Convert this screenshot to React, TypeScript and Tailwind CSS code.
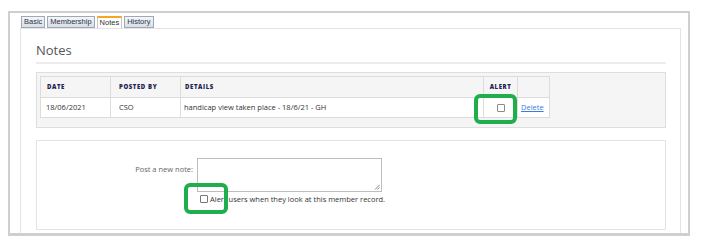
import React from "react";

const font = { fontFamily: '"Open Sans", "Liberation Sans", sans-serif' };

function Tab({ label, active }: { label: string; active?: boolean }) {
  return (
    <div
      className={
        active
          ? "h-[13px] px-[2px] border border-b-0 border-[#c6c6c6] border-t-2 border-t-[#f5a623] bg-white text-[7.5px] leading-[10px] text-[#333] -mb-px"
          : "h-[12px] px-[2px] border border-[#9ea9b8] bg-gradient-to-b from-[#f4f6f9] to-[#d9dee6] text-[7.5px] leading-[10px] text-[#2b3445]"
      }
      style={{ fontFamily: '"Liberation Sans", Tahoma, sans-serif' }}
    >
      {label}
    </div>
  );
}

function Highlight({ className }: { className: string }) {
  return (
    <div
      className={
        "absolute rounded-[6px] border-[4px] border-[#1fae4b] pointer-events-none " + className
      }
    />
  );
}

export default function App() {
  return (
    <div className="w-[702px] h-[246px] bg-white relative pt-[11px] pl-[8px]" style={font}>
      <div className="w-[682px] h-[225px] border-2 border-b-[3px] border-[#cfcfcf] pl-[10px] pr-[7px] pt-[3px] flex flex-col">
        {/* tabs */}
        <div className="flex items-end gap-[2px] pl-px">
          <Tab label="Basic" />
          <Tab label="Membership" />
          <Tab label="Notes" active />
          <Tab label="History" />
        </div>

        {/* panel */}
        <div className="flex-1 border border-b-0 border-[#e4e4e4] pl-[15px] pr-[14px] pt-[13px]">
          <h2 className="text-[13px] leading-[16px] text-[#555] pb-[4px] border-b-2 border-[#ececec]">
            Notes
          </h2>

          <div className="mt-[8px] border border-[#dedede] bg-[#f5f5f5] pt-[3px] pl-[3px] pb-[9px]">
            <table className="border-collapse bg-white text-[7.5px] text-[#333]">
              <thead>
                <tr className="h-[21px] bg-[#f5f5f5] text-[6px] tracking-[0.1em] text-[#1c2350]">
                  <th className="w-[70px] border border-[#dcdcdc] text-left pl-[6px] font-extrabold">DATE</th>
                  <th className="w-[70px] border border-[#dcdcdc] text-left pl-[8px] font-extrabold">POSTED BY</th>
                  <th className="w-[303px] border border-[#dcdcdc] text-left pl-[4px] font-extrabold">DETAILS</th>
                  <th className="w-[34px] border border-[#dcdcdc] text-center font-extrabold">ALERT</th>
                  <th className="w-[32px] border border-[#dcdcdc]"></th>
                </tr>
              </thead>
              <tbody>
                <tr className="h-[20px]">
                  <td className="border border-[#dcdcdc] pl-[5px]">18/06/2021</td>
                  <td className="border border-[#dcdcdc] pl-[8px]">CSO</td>
                  <td className="border border-[#dcdcdc] pl-[3px]">handicap view taken place - 18/6/21 - GH</td>
                  <td className="border border-[#dcdcdc] text-center">
                    <span className="inline-block w-[8px] h-[8px] border border-[#8a8a8a] rounded-[1px] bg-white align-middle" />
                  </td>
                  <td className="border border-[#dcdcdc] pl-[3px]">
                    <a className="text-[#3b7ddd] underline">Delete</a>
                  </td>
                </tr>
              </tbody>
            </table>
          </div>

          <div className="mt-[12px] h-[90px] border border-[#e3e3e3] pt-[17px] flex">
            <div className="w-[160px] text-right text-[7.5px] leading-[10px] text-[#666] pt-[6px] pr-[4px]">
              Post a new note:
            </div>
            <div className="flex flex-col">
              <div className="w-[185px] h-[34px] border border-[#bdbdbd] bg-white relative">
                <svg className="absolute right-px bottom-px" width="6" height="6" viewBox="0 0 6 6">
                  <path d="M5.5 1 L1 5.5 M5.5 3.5 L3.5 5.5" stroke="#666" strokeWidth="0.8" />
                </svg>
              </div>
              <div className="flex items-center gap-[2px] mt-[2px] pl-[3px] text-[7.5px] leading-[10px] text-[#333]">
                <span className="inline-block w-[8px] h-[8px] border border-[#777] rounded-[1px] bg-white" />
                <span>Alert users when they look at this member record.</span>
              </div>
            </div>
          </div>
        </div>
      </div>

      <Highlight className="left-[474px] top-[94px] w-[43px] h-[30px]" />
      <Highlight className="left-[184px] top-[183px] w-[44px] h-[31px]" />
    </div>
  );
}
